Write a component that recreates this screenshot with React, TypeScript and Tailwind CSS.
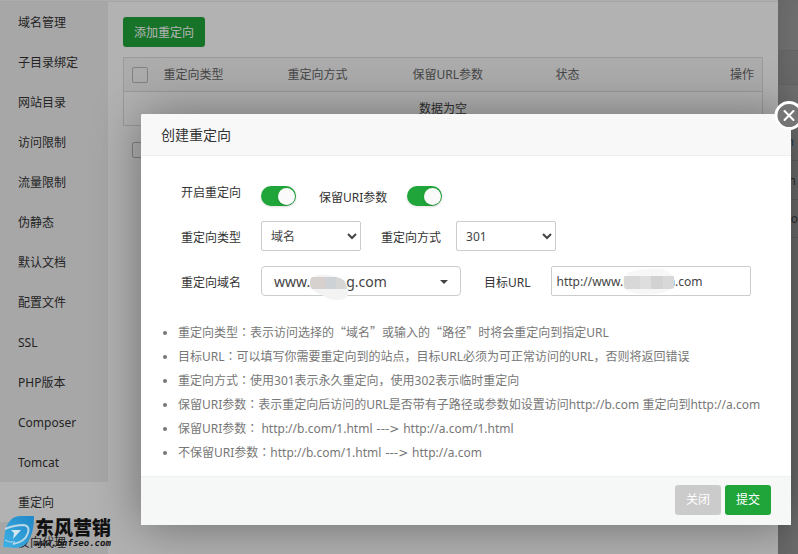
import { useState } from "react";

const menu = [
  "域名管理", "子目录绑定", "网站目录", "访问限制", "流量限制", "伪静态", "默认文档",
  "配置文件", "SSL", "PHP版本", "Composer", "Tomcat", "重定向", "反向代理",
];

const notes = [
  "重定向类型：表示访问选择的“域名”或输入的“路径”时将会重定向到指定URL",
  "目标URL：可以填写你需要重定向到的站点，目标URL必须为可正常访问的URL，否则将返回错误",
  "重定向方式：使用301表示永久重定向，使用302表示临时重定向",
  "保留URI参数：表示重定向后访问的URL是否带有子路径或参数如设置访问http://b.com 重定向到http://a.com",
  "保留URI参数： http://b.com/1.html ---> http://a.com/1.html",
  "不保留URI参数：http://b.com/1.html ---> http://a.com",
];

// Full-width quotes, centred colons and a wide arrow each need their own family.
const markFonts: Record<string, string> = {
  "“": "font-['Noto_Sans_CJK_SC',sans-serif] leading-none",
  "”": "font-['Noto_Sans_CJK_SC',sans-serif] leading-none",
  "：": "font-['Noto_Sans_CJK_TC',sans-serif] leading-none",
  " ---> ": "font-['DejaVu_Sans',sans-serif] leading-none whitespace-pre",
};

function Note({ text }: { text: string }) {
  return (
    <li>
      {text.split(/([：“”]| ---> )/).map((part, i) =>
        markFonts[part] ? <span key={i} className={markFonts[part]}>{part}</span> : part,
      )}
    </li>
  );
}

function Sidebar() {
  return (
    <nav className="w-[108px] shrink-0 bg-[#f0f0f1]">
      {menu.map((m) => (
        <a
          key={m}
          href="#"
          className={`block h-10 pl-[18px] leading-[42px] text-[#333] ${m === "重定向" ? "bg-white" : ""}`}
        >
          {m}
        </a>
      ))}
    </nav>
  );
}

function Check({ label }: { label: string }) {
  return (
    <input
      type="checkbox"
      aria-label={label}
      className="block size-4 appearance-none rounded-xs border border-[#bbb]"
    />
  );
}

function RedirectPage() {
  return (
    <main className="min-w-0 flex-1 px-[15px] pt-[15px] text-[#666]">
      <button className="block h-[30px] rounded-[3px] bg-[#20a53a] px-[11px] pt-px text-white">添加重定向</button>
      <table className="mt-2.5 w-full table-fixed border border-[#ddd] text-left">
        <thead className="bg-[#f6f6f6]">
          <tr className="h-[34px] border-b border-[#ddd]">
            <th className="w-8 pl-2"><Check label="全选" /></th>
            <th className="w-[124px] pl-2 font-normal">重定向类型</th>
            <th className="w-[125px] pl-2 font-normal">重定向方式</th>
            <th className="w-[143px] pl-2 font-normal">保留URL参数</th>
            <th className="pl-2 font-normal">状态</th>
            <th className="pr-2 text-right font-normal">操作</th>
          </tr>
        </thead>
        <tbody>
          <tr className="h-[34px]">
            <td colSpan={6} className="text-center text-[#444]">数据为空</td>
          </tr>
        </tbody>
      </table>
      <div className="mt-4 pl-[9px]"><Check label="选择全部重定向" /></div>
    </main>
  );
}

function BackgroundList() {
  return (
    <aside className="w-5 shrink-0 overflow-hidden bg-[#a4a4a4] pt-[50px] text-right shadow-[inset_20px_0_30px_-10px_rgba(0,0,0,0.12)]">
      <div className="h-[35px] border-y border-[#8c8c8c] bg-black/5" />
      <div className="h-[38px]" />
      <div className="h-[38px] border-b border-[#8c8c8c] pr-1 leading-[38px] text-[#357]">n</div>
      <div className="h-[39px] border-b border-[#8c8c8c] pr-0.5 leading-[39px] text-[#444]">n</div>
      <div className="h-[38px] border-b border-[#8c8c8c] leading-[38px] text-[#444]">co</div>
    </aside>
  );
}

function Toggle({ id, label }: { id: string; label: string }) {
  const [on, setOn] = useState(true);
  return (
    <input
      id={id}
      type="checkbox"
      role="switch"
      aria-label={label}
      checked={on}
      onChange={() => setOn(!on)}
      className="flex h-5 w-[35px] appearance-none items-center rounded-full bg-gray-300 px-px shadow-sm before:size-[17px] before:rounded-full before:bg-[#fafafa] before:shadow checked:justify-end checked:bg-[#20a53a]"
    />
  );
}

function RowLabel({ htmlFor, children }: { htmlFor: string; children: string }) {
  return <label htmlFor={htmlFor} className="mr-5 h-[30px] w-20 text-right leading-[33px]">{children}</label>;
}

const selectClass = "h-[30px] w-[100px] rounded-xs border border-[#ccc] bg-white px-[5px] text-[#444]";

function Dialog() {
  return (
    <section role="dialog" aria-label="创建重定向" className="relative h-fit w-full rounded-xs bg-white text-[#333] shadow-[1px_1px_50px_rgba(0,0,0,0.4)]">
      <h2 className="h-[42px] rounded-t-xs border-b border-[#eee] bg-[#f8f8f8] px-5 text-sm leading-[42px]">创建重定向</h2>
      <button aria-label="关闭窗口" className="absolute -top-3.5 -right-[13px] size-[30px]">
        <svg viewBox="0 0 30 30" className="size-[30px]">
          <circle cx="15" cy="15.5" r="13" fill="#757575" stroke="#fff" strokeWidth="3" />
          <path d="M10.5 11l9 9M19.5 11l-9 9" stroke="#fff" strokeWidth="2" strokeLinecap="round" />
        </svg>
      </button>

      <form className="flex flex-col gap-[15px] px-5 pt-5">
        <div className="flex items-end">
          <RowLabel htmlFor="enabled">开启重定向</RowLabel>
          <Toggle id="enabled" label="开启重定向" />
          <label htmlFor="keep" className="mr-5 ml-[23px] h-5 leading-6">保留URI参数</label>
          <Toggle id="keep" label="保留URI参数" />
        </div>
        <div className="flex">
          <RowLabel htmlFor="type">重定向类型</RowLabel>
          <select id="type" className={selectClass}><option>域名</option><option>路径</option></select>
          <label htmlFor="mode" className="mr-[15px] ml-5 h-[30px] leading-[33px]">重定向方式</label>
          <select id="mode" className={selectClass}><option>301</option><option>302</option></select>
        </div>
        <div className="flex">
          <RowLabel htmlFor="domain">重定向域名</RowLabel>
          <button id="domain" type="button" className="relative flex h-[30px] w-[200px] items-center justify-between rounded border border-[#ccc] px-3 pt-px text-sm text-[#444]">
            <span className="flex">www.<span className="w-9" />g.com</span>
            <span className="border-x-4 border-t-4 border-x-transparent border-t-[#444]" />
            <svg viewBox="0 0 44 28" className="absolute top-[6px] left-[46px] h-7 w-11">
              <path d="M2 5Q12-1 26 3Q36 5 39 12Q44 25 32 27Q22 28 14 22Q0 18 2 5Z" fill="#f3f3f3" />
              <path d="M4 4H28Q38 5 39 16H4Q0 10 4 4Z" fill="#d6d6d4" />
              <path d="M4 4H18V16H4Q0 10 4 4Z" fill="#d6d0cf" />
              <path d="M18 4H28V16H18Z" fill="#cdd2d7" />
            </svg>
          </button>
          <label htmlFor="url" className="mr-5 ml-[23px] h-[30px] leading-[33px]">目标URL</label>
          <div className="relative">
            <input id="url" defaultValue="http://www.nnnnnnn.com" className="h-[30px] w-[200px] rounded-xs border border-[#ccc] px-[5px] text-[#444]" />
            <svg viewBox="0 0 52 28" className="pointer-events-none absolute top-[2px] left-[72px] h-7 w-[52px]">
              <path d="M4 5Q20 0 40 1Q50 4 51 14Q50 26 28 26Q6 27 1 20Z" fill="#f7f7f7" />
              <path d="M1 8H51V20Q49 21 47 21H3Q1 20 1 18Z" fill="#d8d8d8" />
              <path d="M17 8H28V21H17Z" fill="#dedede" />
              <path d="M28 8H40V21H28Z" fill="#d2d2d2" />
            </svg>
          </div>
        </div>
      </form>

      <ul className="mt-[25px] mb-[11px] list-disc pr-2 pl-[37px] leading-6 text-[#777]">
        {notes.map((n) => <Note key={n} text={n} />)}
      </ul>

      <footer className="flex justify-end gap-1 border-t border-[#edf1f2] bg-[#f6f8f8] px-5 pt-2 pb-2.5 text-white">
        <button className="h-[30px] rounded-[3px] bg-[#cbcbcb] px-[11px]">关闭</button>
        <button className="h-[30px] rounded-[3px] bg-[#20a53a] px-[11px]">提交</button>
      </footer>
    </section>
  );
}

function Watermark() {
  return (
    <div className="pointer-events-none absolute bottom-0 left-0 flex items-start">
      <svg viewBox="0 0 35 40" className="h-10 w-[35px]">
        <defs>
          <linearGradient id="wm" x1="0" y1="1" x2="1" y2="0">
            <stop offset="0" stopColor="#3fb2e6" />
            <stop offset="1" stopColor="#1f86c6" />
          </linearGradient>
        </defs>
        <path d="M3 33L5 18Q7 8 13 4Q16 2 21 2H34Q34 14 31 22Q27 33 16 34Z" fill="url(#wm)" />
        <path d="M5 15Q14 11 24 11Q30 12 28 19Q25 28 13 30" fill="none" stroke="#b9d8e6" strokeWidth="2" />
        <path d="M11 16H21L13 25L14 19Z" fill="#d3e6ee" />
        <path d="M5 26Q9 29 15 28" fill="none" stroke="#b9d8e6" strokeWidth="1" />
      </svg>
      <div className="pt-px font-['Noto_Sans_CJK_SC',sans-serif] font-black text-[#111]">
        <div className="text-[19px] leading-6">东风营销</div>
        <div className="font-['DejaVu_Sans_Mono',monospace] text-[9px] leading-2 font-bold italic">www.bnfseo.com</div>
      </div>
    </div>
  );
}

export default function App() {
  return (
    <div className="relative h-screen overflow-hidden bg-white font-['Noto_Sans','Noto_Sans_CJK_SC',sans-serif] text-xs">
      <div className="flex h-full">
        <div className="flex min-w-0 flex-1 flex-col">
          <div className="h-0.5 shrink-0 border-b border-[#eee] bg-[#f8f8f8]" />
          <div className="flex min-h-0 flex-1">
            <Sidebar />
            <RedirectPage />
          </div>
        </div>
        <BackgroundList />
      </div>
      <div className="absolute inset-0 flex bg-black/30 pt-[114px] pr-[7px] pl-[141px]">
        <Dialog />
      </div>
      <Watermark />
    </div>
  );
}
